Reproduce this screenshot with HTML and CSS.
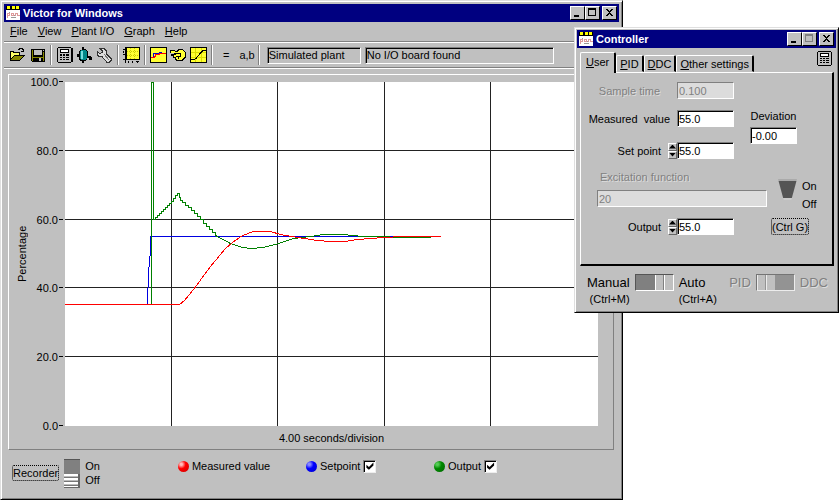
FILE: index.html
```
<!DOCTYPE html>
<html lang="en">
<head>
    <meta charset="UTF-8">
    <meta name="viewport" content="width=device-width, initial-scale=1.0">
    <title>Victor for Windows</title>
    <link rel="stylesheet" href="styles.css">
</head>
<body>

    <svg class="symbols" aria-hidden="true">
        <symbol id="app-icon" viewBox="0 0 14 14">
            <path fill="#000" d="M0 0h14v4H0z"/>
            <path fill="#ff0" d="M1 0h3v3H1zM6 0h3v3H6zM10 0h3v3h-3z"/>
            <path fill="#fff" d="M0 4h14v10H0z"/>
            <path fill="none" stroke="#d99" d="M1.500 12V7.500h2v2h-2M5.500 7.500h2v2h-2zM9.500 10V7.500h2v2h2"/>
            <path fill="#999" d="M3 6h1v1H3zM5 11h5v1H5zM8 9h1v1H8z"/>
        </symbol>
        <symbol id="calc-icon" viewBox="0 0 15 15">
            <path fill="#000" d="M1 0h13v1h1v13h-1v1H1v-1H0V1h1z"/>
            <path fill="#c0c0c0" d="M1 1h13v13H1z"/>
            <path fill="#000" d="M3 2h9v4H3z"/>
            <path fill="#fff" d="M4 3h7v2H4z"/>
            <path fill="#000" d="M3 7h2v1H3zM6 7h2v1H6zM9 7h3v1H9zM3 9h2v1H3zM6 9h2v1H6zM9 9h3v1H9zM3 11h2v1H3zM6 11h2v1H6zM9 11h3v1H9z"/>
        </symbol>
    </svg>

    <!-- main window -->
    <main class="window main-window">
        <header class="title-bar">
            <svg class="app-icon"><use href="#app-icon"/></svg>
            <h1>Victor for Windows</h1>
            <button class="win-btn" aria-label="Minimize"><svg viewBox="0 0 12 10"><path d="M2 8h6v2H2z"/></svg></button>
            <button class="win-btn" aria-label="Maximize"><svg viewBox="0 0 12 10"><path d="M1 0h9v9H1zM2 2v6h7V2z" fill-rule="evenodd"/></svg></button>
            <button class="win-btn close" aria-label="Close"><svg viewBox="0 0 12 10"><path d="M2 1h2v1h1v1h2V2h1V1h2v1H9v1H8v1H7v2h1v1h1v1h1v1H8V8H7V7H5v1H4v1H2V8h1V7h1V6h1V4H4V3H3V2H2z"/></svg></button>
        </header>

        <nav class="menu">
            <button><u>F</u>ile</button>
            <button><u>V</u>iew</button>
            <button><u>P</u>lant I/O</button>
            <button><u>G</u>raph</button>
            <button><u>H</u>elp</button>
        </nav>

        <div class="toolbar">
            <div class="tools">
                <button aria-label="Open">
                    <svg viewBox="0 0 17 16">
                        <path fill="#000" d="M1 4h4v1h6v3h5v1h-1v1h-1v1h-1v1h-1v1h-1v1H1z"/>
                        <path fill="#ff6" d="M2 5h2v1h6v2H5v1H4v1H3v1H2z"/>
                        <path fill="#880" d="M5 9h9l-4 4H2v-1z"/>
                        <path fill="none" stroke="#000" d="M9 2.500h1v-1h3v1h1v2M12 4.500h3M14.500 2v2"/>
                    </svg>
                </button>
                <button aria-label="Save">
                    <svg viewBox="0 0 17 16">
                        <path fill="#000" d="M2 2h14v13H3v-1H2z"/>
                        <path fill="#880" d="M3 3h1v7h10V5h1v9h-1v-3H4v3H3z"/>
                        <path fill="#c0c0c0" d="M5 3h8v5H5zM14 3h1v1h-1zM10 11h2v3h-2z"/>
                    </svg>
                </button>
            </div>
            <div class="tools">
                <button aria-label="Calculator"><svg><use href="#calc-icon"/></svg></button>
                <button aria-label="Tank">
                    <svg viewBox="0 0 17 16">
                        <path fill="#000" d="M6 0h2v2h2v1h1v1h1v5h3v1h1v3h-3v-2h-2v2h-1v1H8v2H6v-2H4v-1H3v-3H1V7h2V4h1V3h2z"/>
                        <path fill="#088" d="M5 3h5v1h1v8h-1v1H5v-1H4V4h1z"/>
                        <path fill="#7dd" d="M5 4h2v8H5z"/>
                    </svg>
                </button>
                <button aria-label="Settings">
                    <svg viewBox="0 0 17 16">
                        <path fill="#ddd" stroke="#333" d="M4 1.500h4l2 2v3l5 5v2l-2 2h-2l-5-6H3l-2-2v-3l3 2 2-1v-2z"/>
                        <path stroke="#777" fill="none" d="M8 7l5 6"/>
                    </svg>
                </button>
            </div>
            <div class="tools">
                <button aria-label="Axis scales">
                    <svg viewBox="0 0 17 16">
                        <path fill="#000" d="M2 0h15v13H3v3H2v-3H0v-1h2V8H0V7h2V3H0V2h2z"/>
                        <path fill="#ff3" d="M4 1h12v11H4z"/>
                        <path stroke="#cc0" stroke-dasharray="1 1" d="M4 4.500h12M4 8.500h12M7.500 1v11M11.500 1v11"/>
                        <path fill="#000" d="M5 14h1v2H5zM9 14h1v2H9zM13 14h3v1h-3zM14 15h1v1h-1zM0 4h1v2H0z"/>
                    </svg>
                </button>
            </div>
            <div class="tools">
                <button aria-label="Graph">
                    <svg viewBox="0 0 17 16">
                        <path fill="#000" d="M0 0h17v16H0z"/>
                        <path fill="#ff3" d="M1 1h15v14H1z"/>
                        <path fill="none" stroke="#00c" d="M1 10.500h2.500v-4h6v-1h2"/>
                        <path fill="none" stroke="#f00" d="M1 10.500h3v-1h1v-2h4v-1h7"/>
                    </svg>
                </button>
                <button aria-label="Manual control">
                    <svg viewBox="0 0 17 16">
                        <path fill="#000" d="M0 3h5v1h2V3h1V2h5v1h1v1h1v1h1v6h-1v1h-1v1h-1v1H6v-1H5v-2H3V9H1V7h3V6H0z"/>
                        <path fill="#ff3" d="M1 4h4v1h3V4h1V3h4v1h1v1h1v5h-1v1h-1v1h-1v1H7v-1H6v-2H4V8h2V6H1z"/>
                        <path fill="none" stroke="#000" d="M6 6.500h4.500v3H6M8 9.500v2"/>
                    </svg>
                </button>
                <button aria-label="Curve">
                    <svg viewBox="0 0 17 16">
                        <path fill="#000" d="M0 0h17v16H0z"/>
                        <path fill="#ff3" d="M1 1h15v14H1z"/>
                        <path stroke="#dd0" d="M5.500 1v14M11.500 1v14M1 5.500h15M1 10.500h15"/>
                        <path fill="none" stroke="#000" d="M1 12.500h3l2-1 5-6 2-2h3"/>
                    </svg>
                </button>
            </div>
            <div class="tools text-tools">
                <button>=</button>
                <button>a,b</button>
            </div>
            <input class="field status plant" type="text" value="Simulated plant" aria-label="Plant" readonly>
            <input class="field status board" type="text" value="No I/O board found" aria-label="I/O board" readonly>
        </div>

        <section class="chart">
            <span class="y-title">Percentage</span>
            <div class="y-axis">
                <span>100.0</span>
                <span>80.0</span>
                <span>60.0</span>
                <span>40.0</span>
                <span>20.0</span>
                <span>0.0</span>
            </div>
            <svg class="plot" viewBox="0 0 533 344" preserveAspectRatio="none" role="img" aria-label="Recorder graph">
                <g transform="translate(0.5 0.5)">
                    <path class="grid-line" d="M106 -1V344M212 -1V344M319 -1V344M425 -1V344"/>
                    <path class="grid-line" d="M-1 68H533M-1 137H533M-1 205H533M-1 274H533"/>
                    <path class="setpoint" d="M-1 222H82L83 190L85 168V154H375"/>
                    <path class="output" d="M-1 222H86V0H88V137h2v-2h2v-2h2v-2h2v-2h2v-2h2v-2h2v-2h2v-2h2v-2h2v-3h2v-3h2v-2h2v4h1v3h2v2h3v3h3v2h3v3h3v3h3v3h3v3h3v4h3v3h3v3h3v3h3v3L165 161L177 165L186 166L198 165L213 161L228 156L245 154L258 152H278L297 154L318 154L330 155H365"/>
                    <path class="measured" d="M-1 222H114L119 218L128 207L145 184L160 166L167 160L177 153L188 149H205L215 152L232 155L252 158L265 159H279L292 157L318 155L337 154H375"/>
                </g>
            </svg>
            <span class="x-title">4.00 seconds/division</span>
        </section>

        <footer class="recorder">
            <button class="dotted">Recorder</button>
            <input class="switch-v" type="checkbox" id="recorder" aria-label="Recorder">
            <label class="on-off" for="recorder"><span>On</span><span>Off</span></label>
            <div class="legend">
                <span class="series"><i class="ball red"></i>Measured value</span>
                <label class="series"><i class="ball blue"></i>Setpoint<input type="checkbox" class="tick" checked></label>
                <label class="series"><i class="ball green"></i>Output<input type="checkbox" class="tick" checked></label>
            </div>
        </footer>
    </main>

    <!-- controller window -->
    <section class="window controller">
        <header class="title-bar">
            <svg class="app-icon"><use href="#app-icon"/></svg>
            <h2>Controller</h2>
            <button class="win-btn" aria-label="Minimize"><svg viewBox="0 0 12 10"><path d="M2 8h6v2H2z"/></svg></button>
            <button class="win-btn" aria-label="Maximize" disabled><svg viewBox="0 0 12 10"><path d="M1 0h9v9H1zM2 2v6h7V2z" fill-rule="evenodd"/></svg></button>
            <button class="win-btn close" aria-label="Close"><svg viewBox="0 0 12 10"><path d="M2 1h2v1h1v1h2V2h1V1h2v1H9v1H8v1H7v2h1v1h1v1h1v1H8V8H7V7H5v1H4v1H2V8h1V7h1V6h1V4H4V3H3V2H2z"/></svg></button>
        </header>

        <div class="tabs">
            <button class="tab active"><u>U</u>ser</button>
            <button class="tab"><u>P</u>ID</button>
            <button class="tab"><u>D</u>DC</button>
            <button class="tab"><u>O</u>ther settings</button>
            <button class="calc" aria-label="Calculator"><svg><use href="#calc-icon"/></svg></button>
        </div>

        <div class="pane">
            <div class="values">
                <div class="row off">
                    <label for="sample">Sample time</label>
                    <input class="field" id="sample" type="text" value="0.100" disabled>
                </div>
                <div class="row">
                    <label for="measured">Measured&nbsp; value</label>
                    <input class="field" id="measured" type="text" value="55.0">
                </div>
                <div class="row spaced">
                    <label for="setpoint">Set point</label>
                    <span class="spin"><button aria-label="Set point up"></button><button aria-label="Set point down"></button></span>
                    <input class="field" id="setpoint" type="text" value="55.0">
                </div>
            </div>
            <div class="deviation">
                <label for="deviation">Deviation</label>
                <input class="field" id="deviation" type="text" value="-0.00">
            </div>
            <div class="excitation off">
                <label for="excitation">Excitation function</label>
                <input class="field" id="excitation" type="text" value="20" disabled>
            </div>
            <div class="toggle">
                <input class="wedge" type="checkbox" id="excite" aria-label="Excitation">
                <label class="on-off" for="excite"><span>On</span><span>Off</span></label>
            </div>
            <div class="row">
                <label for="output">Output</label>
                <span class="spin"><button aria-label="Output up"></button><button aria-label="Output down"></button></span>
                <input class="field" id="output" type="text" value="55.0">
            </div>
            <button class="dotted ctrl-g">(Ctrl G)</button>
        </div>

        <div class="modes">
            <label class="mode right" for="auto">Manual<small>(Ctrl+M)</small></label>
            <input class="switch-h" type="checkbox" id="auto" checked>
            <label class="mode" for="auto">Auto<small>(Ctrl+A)</small></label>
            <label class="mode off right" for="ddc">PID</label>
            <input class="switch-h" type="checkbox" id="ddc" disabled>
            <label class="mode off" for="ddc">DDC</label>
        </div>
    </section>

</body>
</html>
```
FILE: styles.css
```
* {
    box-sizing: border-box;
}
body {
    margin: 0;
    background: #fff;
    font-family: "Liberation Sans", Arial, sans-serif;
    font-size: 11px;
    line-height: 14px;
    color: #000;
}
button, input {
    font: inherit;
    color: inherit;
    margin: 0;
}
button {
    padding: 0;
    border: none;
    background: none;
}
svg {
    display: block;
    shape-rendering: crispEdges;
}
.symbols {
    display: none;
}

/* windows */
.window {
    position: absolute;
    display: flex;
    flex-direction: column;
    background: #c0c0c0;
    border: 1px solid;
    border-color: #dfdfdf #000 #000 #dfdfdf;
    box-shadow: inset 1px 1px #fff, inset -1px -1px #808080;
}
.main-window {
    top: 0;
    left: 0;
    right: 216px;
    min-height: 100vh;
    padding: 3px;
}
.controller {
    top: 27px;
    right: 0;
    width: 265px;
    padding: 2px 2px 4px;
}
.title-bar {
    display: flex;
    align-items: center;
    height: 18px;
    padding: 0 2px;
    background: #000080;
    color: #fff;
}
.app-icon {
    width: 14px;
    height: 14px;
    margin-right: 3px;
}
.title-bar h1, .title-bar h2 {
    flex: 1;
    margin: 0;
    font-size: 11px;
    font-weight: bold;
}
.win-btn {
    width: 15px;
    height: 14px;
    padding: 1px;
    background: #c0c0c0;
    border: 1px solid;
    border-color: #fff #000 #000 #fff;
}
.win-btn:disabled {
    fill: #808080;
}
.win-btn.close {
    margin-left: 2px;
}

/* menu and toolbar */
.menu {
    display: flex;
    gap: 10px;
    height: 20px;
    padding: 0 0 2px 6px;
    border-bottom: 1px solid #808080;
}
.toolbar {
    display: flex;
    align-items: center;
    height: 26px;
    border-top: 1px solid #fff;
    border-bottom: 1px solid #808080;
    box-shadow: 0 1px #fff;
}
.tools {
    display: flex;
    gap: 3px;
    height: 20px;
    padding: 0 4px 0 5px;
    align-items: center;
    border-right: 1px solid #808080;
    box-shadow: 1px 0 #fff;
}
.tools svg {
    width: 17px;
    height: 16px;
}
.text-tools {
    padding: 0 3px 0 11px;
    gap: 10px;
}
.field {
    height: 17px;
    padding: 0 1px;
    background: #fff;
    border: 1px solid;
    border-color: #808080 #fff #fff #808080;
    box-shadow: inset 1px 1px #000;
    border-radius: 0;
    outline: none;
}
.field:disabled {
    background: #dcdcdc;
    box-shadow: none;
    color: #808080;
}
.status {
    background: #c0c0c0;
}
.plant {
    width: 94px;
    margin: 0 4px 0 8px;
}
.board {
    width: 189px;
}

/* chart */
.chart {
    flex: 1;
    display: grid;
    grid-template-columns: 20px 36px 1fr;
    grid-template-rows: 1fr 23px;
    margin: 6px 5px 0 4px;
    padding: 7px 15px 0 0;
    border: 1px solid;
    border-color: #fff #808080 #808080 #fff;
}
.y-title {
    writing-mode: vertical-rl;
    transform: rotate(180deg);
    text-align: center;
    justify-self: end;
}
.y-axis {
    display: flex;
    flex-direction: column;
    justify-content: space-between;
    margin: -7px 0;
    padding-right: 2px;
    text-align: right;
}
.y-axis span::after {
    content: "";
    display: inline-block;
    width: 4px;
    height: 1px;
    margin-left: 1px;
    vertical-align: 4px;
    background: #000;
}
.plot {
    width: 100%;
    height: 100%;
    min-height: 0;
    background: #fff;
    fill: none;
}
.plot path {
    vector-effect: non-scaling-stroke;
}
.grid-line {
    stroke: #222;
}
.setpoint {
    stroke: #0000e0;
}
.output {
    stroke: #008000;
}
.measured {
    stroke: #f00;
}
.x-title {
    grid-column: 3;
    align-self: center;
    text-align: center;
}

/* recorder strip */
.recorder {
    display: flex;
    align-items: center;
    height: 46px;
    padding-left: 8px;
}
.dotted {
    border: 1px dotted #000;
    border-radius: 2px;
}
.switch-v, .switch-h, .wedge {
    appearance: none;
    background: #808080;
}
.switch-v {
    width: 16px;
    height: 28px;
    margin: 0 5px 0 5px;
    border-top: 1px solid #555;
}
.switch-v::before {
    content: "";
    display: block;
    height: 13px;
    margin-top: 14px;
    background: repeating-linear-gradient(#fff 0 2px, #bbb 2px 3px, #777 3px 4px);
    border-right: 2px solid #666;
    border-bottom: 1px solid #666;
}
.switch-v:checked::before {
    margin-top: 0;
}
.on-off {
    display: flex;
    flex-direction: column;
}
.legend {
    flex: 1;
    display: grid;
    grid-template-columns: repeat(3, 1fr);
    margin: -14px 57px 0 78px;
}
.series {
    display: flex;
    align-items: center;
    gap: 3px;
}
.ball {
    width: 11px;
    height: 11px;
    border-radius: 50%;
}
.red {
    background: radial-gradient(circle at 30% 30%, #fbb 10%, #f00 40%, #c00);
}
.blue {
    background: radial-gradient(circle at 30% 30%, #88f 10%, #00f 40%, #00c);
}
.green {
    background: radial-gradient(circle at 30% 30%, #5c5 10%, #080 40%, #060);
}
.tick {
    appearance: none;
    width: 13px;
    height: 13px;
    padding: 1px;
    background: #fff;
    border: 1px solid;
    border-color: #808080 #eee #eee #808080;
    box-shadow: inset 1px 1px #000;
}
.tick:checked::before {
    content: "";
    display: block;
    width: 9px;
    height: 9px;
    background: #000;
    clip-path: polygon(12% 35%, 40% 60%, 90% 10%, 90% 45%, 40% 92%, 12% 70%);
}

/* controller tabs */
.tabs {
    display: flex;
    align-items: flex-end;
    height: 24px;
    padding: 0 4px 0 3px;
}
.tab {
    height: 17px;
    padding: 0 3px;
    border: 1px solid;
    border-color: #fff #000 transparent #fff;
    border-right-width: 2px;
    border-radius: 2px 2px 0 0;
}
.tab.active {
    height: 21px;
    padding: 0 5px 2px;
    margin-bottom: -1px;
    background: #c0c0c0;
    border-bottom: none;
    z-index: 1;
}
.calc {
    margin: 0 0 6px auto;
}
.calc svg {
    width: 15px;
    height: 15px;
}
.pane {
    display: grid;
    grid-template-columns: 188px 1fr;
    row-gap: 9px;
    margin: 0 2px 0 3px;
    padding: 9px 0 29px;
    border: 1px solid;
    border-color: #fff #000 #000 #fff;
    border-right-width: 2px;
    border-bottom-width: 2px;
}
.row {
    display: flex;
    align-items: center;
    justify-content: flex-end;
    margin-right: 35px;
}
.row label {
    margin-right: 7px;
}
.row .field {
    width: 57px;
}
.row.off label {
    margin-right: 17px;
}
.off {
    color: #808080;
    text-shadow: 1px 1px #ddd;
}
.values {
    display: flex;
    flex-direction: column;
    gap: 11px;
}
.spaced {
    margin-top: 4px;
}
.spin {
    display: flex;
    flex-direction: column;
    width: 9px;
}
.spin button {
    height: 8px;
    padding: 1px 0;
    border: 1px solid;
    border-color: #fff #666 #666 #fff;
}
.spin button::before {
    content: "";
    display: block;
    height: 4px;
    background: #000;
    clip-path: polygon(50% 0, 100% 100%, 0 100%);
}
.spin button:last-child::before {
    clip-path: polygon(0 0, 100% 0, 50% 100%);
}
.deviation {
    display: flex;
    flex-direction: column;
    align-items: center;
    width: 47px;
    padding-top: 27px;
    gap: 4px;
    margin-left: -19px;
}
.deviation .field {
    width: 47px;
}
.excitation {
    display: flex;
    flex-direction: column;
    padding: 2px 2px 0 16px;
    gap: 6px;
}
.excitation label {
    margin-left: 3px;
}
.toggle {
    display: flex;
    padding: 11px 0 0 9px;
    gap: 5px;
}
.wedge {
    width: 19px;
    height: 21px;
    background: linear-gradient(#aaa 2px, #555 2px 19px, #ccc 19px);
    clip-path: polygon(0 0, 100% 0, 70% 100%, 30% 100%);
}
.toggle .on-off {
    gap: 4px;
    margin-bottom: -2px;
}
.ctrl-g {
    justify-self: start;
    margin-left: 2px;
}

/* mode switches */
.modes {
    display: flex;
    align-items: flex-start;
    padding: 8px 8px 0 10px;
    min-height: 42px;
}
.mode {
    display: flex;
    flex-direction: column;
    font-size: 13px;
    line-height: 17px;
}
.mode small {
    font-size: 11px;
}
.mode.right {
    align-items: flex-end;
}
.mode.off.right {
    margin-left: auto;
}
.switch-h {
    width: 39px;
    height: 17px;
    margin: 0 5px;
    border: 1px solid;
    border-color: #555 #fff #fff #555;
}
.switch-h::before {
    content: "";
    display: block;
    width: 18px;
    height: 15px;
    background: linear-gradient(90deg, #fff 1px, #c0c0c0 1px 8px, #808080 8px 9px, #fff 9px 10px, #c0c0c0 10px);
}
.switch-h:checked::before {
    margin-left: 19px;
}
.switch-h:disabled {
    opacity: 0.7;
}
```
